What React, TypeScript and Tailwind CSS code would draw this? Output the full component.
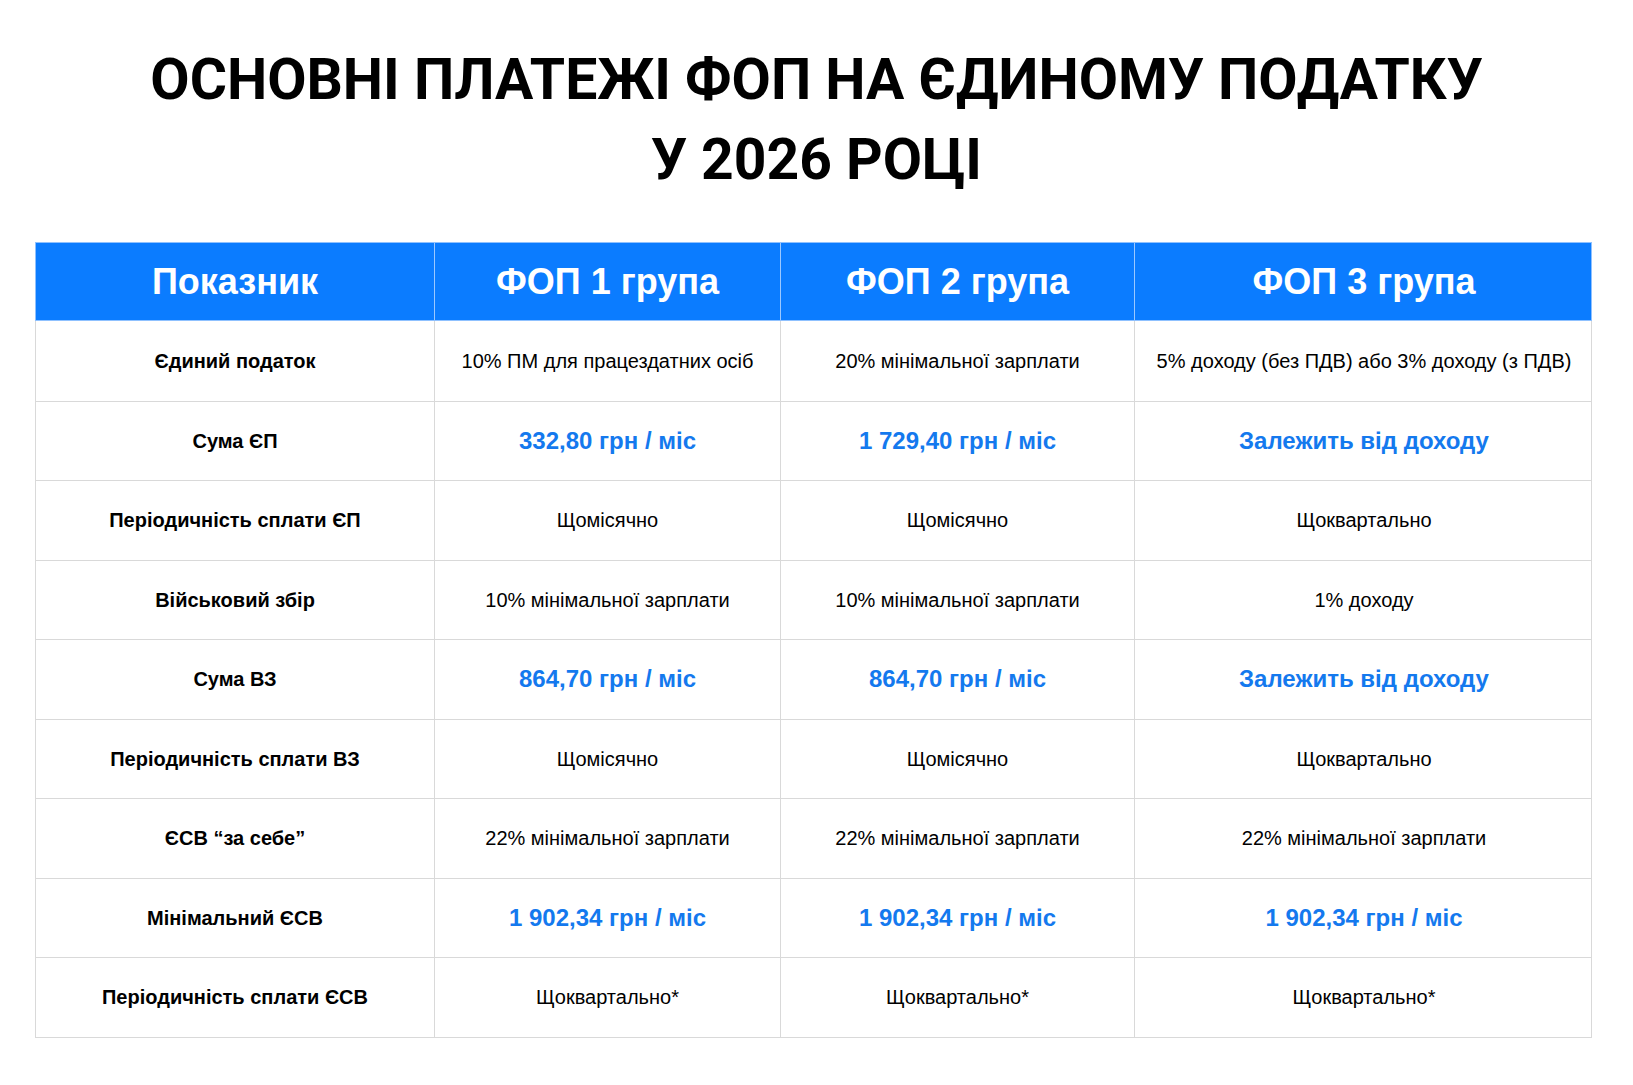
import React from 'react';

type Cell = { text: string; accent?: boolean };

const rows: { label: string; cells: Cell[] }[] = [
  {
    label: 'Єдиний податок',
    cells: [
      { text: '10% ПМ для працездатних осіб' },
      { text: '20% мінімальної зарплати' },
      { text: '5% доходу (без ПДВ) або 3% доходу (з ПДВ)' },
    ],
  },
  {
    label: 'Сума ЄП',
    cells: [
      { text: '332,80 грн / міс', accent: true },
      { text: '1 729,40 грн / міс', accent: true },
      { text: 'Залежить від доходу', accent: true },
    ],
  },
  {
    label: 'Періодичність сплати ЄП',
    cells: [{ text: 'Щомісячно' }, { text: 'Щомісячно' }, { text: 'Щоквартально' }],
  },
  {
    label: 'Військовий збір',
    cells: [
      { text: '10% мінімальної зарплати' },
      { text: '10% мінімальної зарплати' },
      { text: '1% доходу' },
    ],
  },
  {
    label: 'Сума ВЗ',
    cells: [
      { text: '864,70 грн / міс', accent: true },
      { text: '864,70 грн / міс', accent: true },
      { text: 'Залежить від доходу', accent: true },
    ],
  },
  {
    label: 'Періодичність сплати ВЗ',
    cells: [{ text: 'Щомісячно' }, { text: 'Щомісячно' }, { text: 'Щоквартально' }],
  },
  {
    label: 'ЄСВ “за себе”',
    cells: [
      { text: '22% мінімальної зарплати' },
      { text: '22% мінімальної зарплати' },
      { text: '22% мінімальної зарплати' },
    ],
  },
  {
    label: 'Мінімальний ЄСВ',
    cells: [
      { text: '1 902,34 грн / міс', accent: true },
      { text: '1 902,34 грн / міс', accent: true },
      { text: '1 902,34 грн / міс', accent: true },
    ],
  },
  {
    label: 'Періодичність сплати ЄСВ',
    cells: [{ text: 'Щоквартально*' }, { text: 'Щоквартально*' }, { text: 'Щоквартально*' }],
  },
];

const headers = ['Показник', 'ФОП 1 група', 'ФОП 2 група', 'ФОП 3 група'];

const App = () => {
  return (
    <div className="w-[1633px] h-[1085px] bg-white overflow-hidden">
      <h1 className="pt-[40px] text-center text-black font-bold uppercase text-[57px] leading-[79.5px] tracking-normal font-['Roboto',sans-serif]">
        Основні платежі ФОП на єдиному податку
        <br />
        у 2026 році
      </h1>

      <div className="mt-[43px] ml-[35px] w-[1557px] font-['Liberation_Sans',Arial,sans-serif]">
        <div className="grid grid-cols-[398px_346px_354px_459px] h-[79px] bg-[#0b7cff] border border-[#8fc1ff]">
          {headers.map((h, i) => (
            <div
              key={h}
              className={`flex items-center justify-center text-white font-bold text-[36px] ${i > 0 ? 'border-l border-[#9cc8ff]' : ''}`}
            >
              {h}
            </div>
          ))}
        </div>
        <div className="border-x border-b border-[#d9d9d9]">
          {rows.map((r, ri) => (
            <div
              key={ri}
              className={`grid grid-cols-[398px_346px_354px_459px] h-[79.5px] ${ri > 0 ? 'border-t border-[#d9d9d9]' : ''}`}
            >
              <div className="flex items-center justify-center text-black font-bold text-[20px]">
                {r.label}
              </div>
              {r.cells.map((c, ci) => (
                <div
                  key={ci}
                  className={`flex items-center justify-center border-l border-[#d9d9d9] ${
                    c.accent ? 'text-[#1479ee] font-bold text-[24px]' : 'text-black text-[20px]'
                  }`}
                >
                  {c.text}
                </div>
              ))}
            </div>
          ))}
        </div>
      </div>
    </div>
  );
};

export default App;
